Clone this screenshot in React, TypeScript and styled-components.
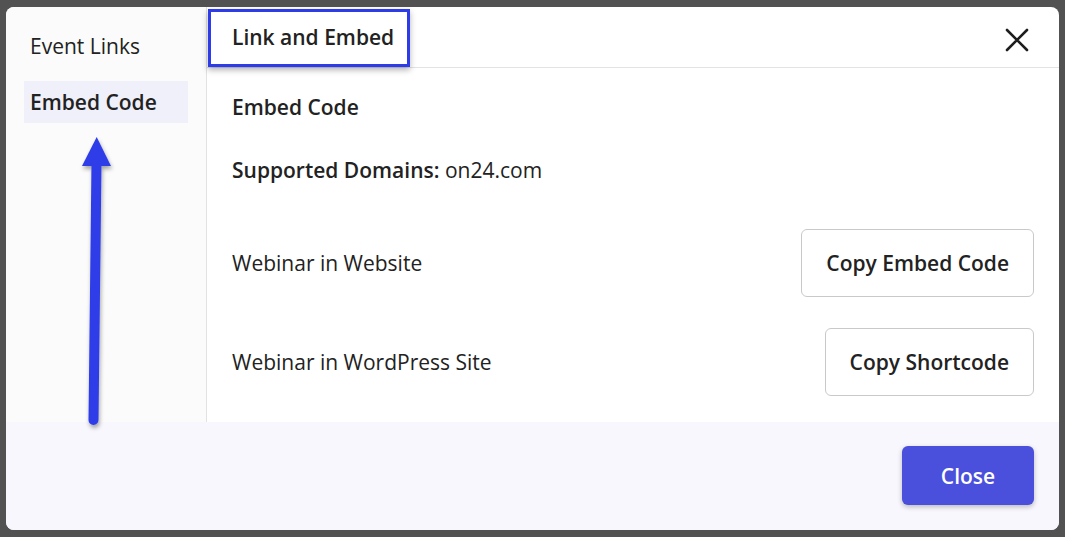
import React from "react";
import styled, { createGlobalStyle } from "styled-components";

const accent = "#4a4fdc";
const annotation = "#2d3ce8";

const GlobalStyle = createGlobalStyle`
  html, body {
    margin: 0;
    padding: 0;
    background: #525252;
  }
  body {
    font-family: "Open Sans", "Noto Sans", sans-serif;
    color: #222;
  }
`;

const Backdrop = styled.div`
  width: 1065px;
  height: 537px;
  box-sizing: border-box;
  padding: 7px 6px 7px 6px;
  position: relative;
`;

const Modal = styled.div`
  width: 1053px;
  height: 523px;
  background: #fff;
  border-radius: 8px;
  overflow: hidden;
  display: flex;
  flex-direction: column;
`;

const Main = styled.div`
  display: flex;
  height: 415px;
  flex-shrink: 0;
`;

const Sidebar = styled.nav`
  width: 201px;
  box-sizing: border-box;
  background: #fbfbfb;
  border-right: 1px solid #e2e2e2;
  padding: 18px 18px 0 18px;
  display: flex;
  flex-direction: column;
  gap: 14px;
`;

const NavItem = styled.div<{ $active?: boolean }>`
  height: 42px;
  display: flex;
  align-items: center;
  padding: 0 6px;
  font-size: 21px;
  font-weight: ${(p) => (p.$active ? 600 : 400)};
  background: ${(p) => (p.$active ? "#f0f0fa" : "transparent")};
  color: #222;
`;

const Panel = styled.section`
  flex: 1;
  display: flex;
  flex-direction: column;
`;

const Header = styled.header`
  height: 61px;
  box-sizing: border-box;
  border-bottom: 1px solid #e3e3e3;
  display: flex;
  align-items: flex-start;
  justify-content: space-between;
  padding: 2px 29px 0 1px;
`;

const Title = styled.h2`
  margin: 0;
  height: 58px;
  box-sizing: border-box;
  display: flex;
  align-items: center;
  padding: 0 13px 3px 21px;
  border: 3px solid ${annotation};
  box-shadow: 0 3px 6px rgba(0, 0, 0, 0.3);
  font-size: 21px;
  font-weight: 600;
  color: #222;
`;

const CloseIcon = styled.button`
  margin-top: 18px;
  width: 26px;
  height: 26px;
  padding: 0;
  border: none;
  background: none;
  display: flex;
  align-items: center;
  justify-content: center;
`;

const Content = styled.div`
  padding: 25px 25px 0 25px;
  display: flex;
  flex-direction: column;
`;

const SectionTitle = styled.div`
  font-size: 21px;
  line-height: 28px;
  font-weight: 600;
`;

const Domains = styled.div`
  margin-top: 35px;
  font-size: 21px;
  line-height: 28px;
  strong {
    font-weight: 600;
  }
`;

const Rows = styled.div`
  margin-top: 45px;
  display: flex;
  flex-direction: column;
  gap: 31px;
`;

const Row = styled.div`
  display: flex;
  align-items: center;
  justify-content: space-between;
  font-size: 21px;
  line-height: 28px;
`;

const OutlineButton = styled.button`
  height: 68px;
  padding: 0 24px;
  border: 1px solid #c9c9c9;
  border-radius: 6px;
  background: #fff;
  font-family: inherit;
  font-size: 21px;
  font-weight: 600;
  color: #222;
`;

const Footer = styled.footer`
  flex: 1;
  background: #f7f7fd;
  display: flex;
  justify-content: flex-end;
  align-items: flex-start;
  padding: 24px 25px 0 0;
`;

const PrimaryButton = styled.button`
  width: 132px;
  height: 59px;
  border: none;
  border-radius: 6px;
  background: ${accent};
  color: #fff;
  font-family: inherit;
  font-size: 21px;
  font-weight: 600;
  box-shadow: 0 2px 5px rgba(0, 0, 0, 0.25);
`;

const ArrowOverlay = styled.svg`
  position: absolute;
  left: 0;
  top: 0;
  pointer-events: none;
`;

export default function App() {
  return (
    <>
      <GlobalStyle />
      <Backdrop>
        <Modal>
          <Main>
            <Sidebar>
              <NavItem>Event Links</NavItem>
              <NavItem $active>Embed Code</NavItem>
            </Sidebar>
            <Panel>
              <Header>
                <Title>Link and Embed</Title>
                <CloseIcon aria-label="Close">
                  <svg width="24" height="24" viewBox="0 0 24 24">
                    <path
                      d="M2 2 L22 22 M22 2 L2 22"
                      stroke="#1e1e1e"
                      strokeWidth="2.6"
                      strokeLinecap="round"
                    />
                  </svg>
                </CloseIcon>
              </Header>
              <Content>
                <SectionTitle>Embed Code</SectionTitle>
                <Domains>
                  <strong>Supported Domains:</strong> on24.com
                </Domains>
                <Rows>
                  <Row>
                    <span>Webinar in Website</span>
                    <OutlineButton>Copy Embed Code</OutlineButton>
                  </Row>
                  <Row>
                    <span>Webinar in WordPress Site</span>
                    <OutlineButton>Copy Shortcode</OutlineButton>
                  </Row>
                </Rows>
              </Content>
            </Panel>
          </Main>
          <Footer>
            <PrimaryButton>Close</PrimaryButton>
          </Footer>
        </Modal>
        <ArrowOverlay width="1065" height="537">
          <defs>
            <filter id="arrowShadow" x="-50%" y="-10%" width="200%" height="120%">
              <feDropShadow dx="1" dy="3" stdDeviation="2" floodColor="#000" floodOpacity="0.35" />
            </filter>
          </defs>
          <g filter="url(#arrowShadow)" fill={annotation} stroke={annotation}>
            <line x1="93.5" y1="420" x2="96.5" y2="162" strokeWidth="10" strokeLinecap="round" />
            <polygon points="96.7,137 111,166 82,166" stroke="none" />
          </g>
        </ArrowOverlay>
      </Backdrop>
    </>
  );
}
